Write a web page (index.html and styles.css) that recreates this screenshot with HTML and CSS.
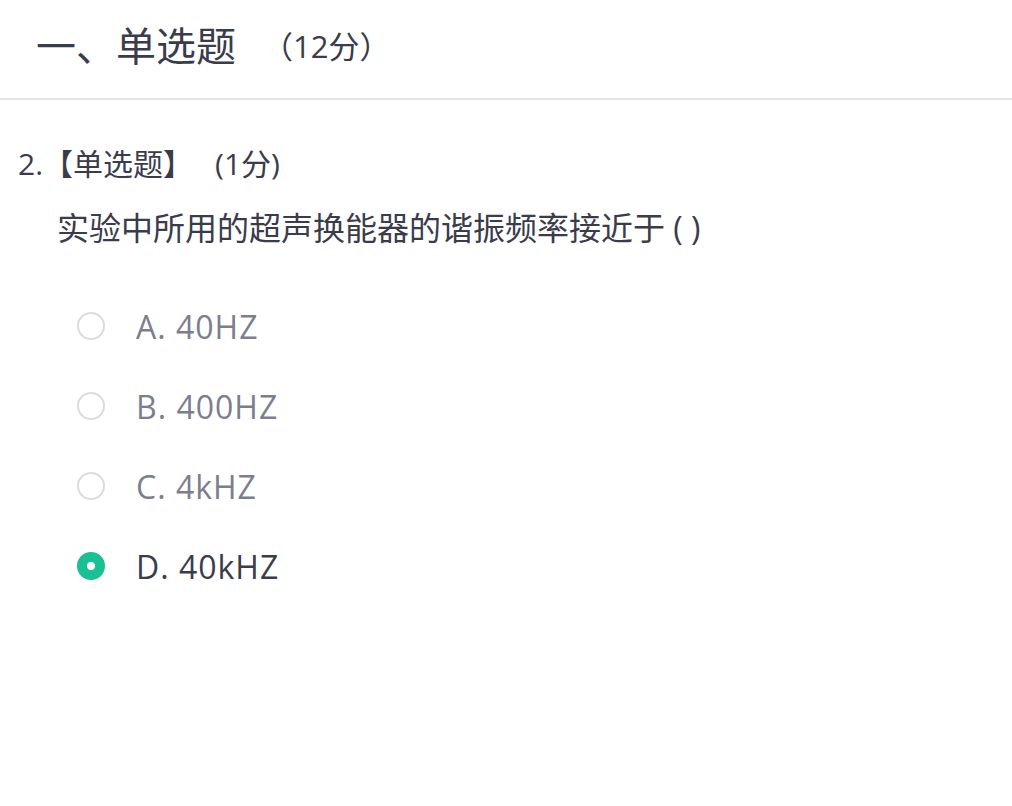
FILE: index.html
```html
<!DOCTYPE html>
<html lang="zh-CN">
<head>
<meta charset="utf-8">
<title>单选题</title>
<link rel="stylesheet" href="styles.css">
</head>
<body>
<div class="page">
  <header class="section-head">
    <span class="section-title">一、单选题</span>
    <span class="section-score">（12分）</span>
  </header>
  <div class="question">
    <div class="q-head">2.【单选题】<span class="q-score">(1分)</span></div>
    <div class="q-text">实验中所用的超声换能器的谐振频率接近于 ( )</div>
    <ul class="options">
      <li class="option"><span class="radio"></span><span class="opt-label">A. 40HZ</span></li>
      <li class="option"><span class="radio"></span><span class="opt-label">B. 400HZ</span></li>
      <li class="option"><span class="radio"></span><span class="opt-label">C. 4kHZ</span></li>
      <li class="option selected"><span class="radio"></span><span class="opt-label">D. 40kHZ</span></li>
    </ul>
  </div>
</div>
</body>
</html>
```
FILE: styles.css
```css
html, body {
  margin: 0;
  padding: 0;
  background: #ffffff;
}
body {
  font-family: "Open Sans", "Noto Sans CJK SC", sans-serif;
  color: #3b3d4c;
}
.page {
  width: 1012px;
}
.section-head {
  height: 100px;
  box-sizing: border-box;
  border-bottom: 2px solid #e6e6e6;
  display: flex;
  align-items: center;
  padding: 0 0 6px 36px;
}
.section-title {
  font-size: 40px;
  line-height: 1;
  color: #3a3c4b;
}
.section-score {
  font-size: 31px;
  line-height: 1;
  margin-left: 26px;
  color: #3a3c4b;
}
.question {
  padding: 44px 0 0 18px;
}
.q-head {
  font-size: 30px;
  line-height: 40px;
  color: #3a3c4b;
}
.q-score {
  margin-left: 22px;
}
.q-text {
  font-size: 32px;
  line-height: 44px;
  margin-top: 22px;
  padding-left: 39px;
  color: #3a3c4b;
}
.options {
  list-style: none;
  margin: 36px 0 0 0;
  padding: 0 0 0 59px;
}
.option {
  height: 80px;
  display: flex;
  align-items: center;
}
.radio {
  width: 28px;
  height: 28px;
  box-sizing: border-box;
  border: 2px solid #dcdcdc;
  border-radius: 50%;
  flex: none;
}
.opt-label {
  font-size: 32px;
  letter-spacing: 1px;
  margin-left: 31px;
  color: #7b7e8e;
}
.option.selected .radio {
  border: 10px solid #18c093;
  background: #ffffff;
}
.option.selected .opt-label {
  color: #3a3c4b;
}
```
